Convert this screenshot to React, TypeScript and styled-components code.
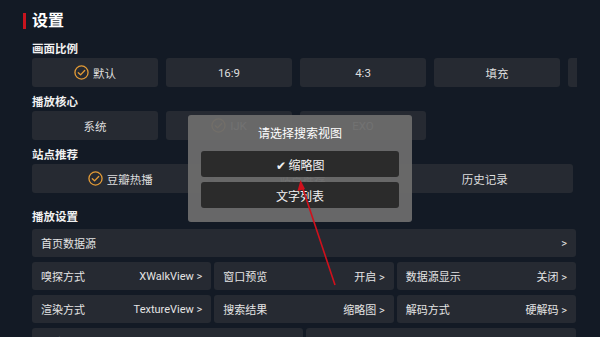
import styled, { createGlobalStyle } from "styled-components";

const GlobalStyle = createGlobalStyle`
  html, body {
    margin: 0;
    padding: 0;
    background: #131a25;
  }
  * {
    box-sizing: border-box;
  }
`;

// last entry is only a sliver at the clipped edge, like in the app
const ratios = ["默认", "16:9", "4:3", "填充", ""];
const cores = ["系统", "IJK", "EXO"];
const sites = ["豆瓣热播", "站点推荐", "历史记录"];

type Cell = { label: string; value: string };

const rows: Cell[][] = [
  [
    { label: "嗅探方式", value: "XWalkView" },
    { label: "窗口预览", value: "开启" },
    { label: "数据源显示", value: "关闭" },
  ],
  [
    { label: "渲染方式", value: "TextureView" },
    { label: "搜索结果", value: "缩略图" },
    { label: "解码方式", value: "硬解码" },
  ],
  [
    { label: "清除缓存", value: "" },
    { label: "播放器", value: "" },
  ],
];

function CheckIcon() {
  return (
    <svg width="15" height="15" viewBox="0 0 16 16">
      <circle cx="8" cy="8" r="7" fill="none" stroke="#e39b36" strokeWidth="1.4" />
      <path d="M4.6 8.2 L7 10.5 L11.4 5.8" fill="none" stroke="#e39b36" strokeWidth="1.4" strokeLinecap="round" strokeLinejoin="round" />
    </svg>
  );
}

export default function App() {
  return (
    <>
      <GlobalStyle />
      <Page>
        <Header>
          <RedBar />
          <Title>设置</Title>
        </Header>
        <Content>
          <Label $top={10}>画面比例</Label>
          <ScrollRow>
            {ratios.map((r, i) => (
              <FixedTile key={i}>
                {i === 0 && <CheckIcon />}
                {r}
              </FixedTile>
            ))}
          </ScrollRow>

          <Label>播放核心</Label>
          <ScrollRow>
            {cores.map((c, i) => (
              <FixedTile key={c}>
                {i === 1 && <CheckIcon />}
                {c}
              </FixedTile>
            ))}
          </ScrollRow>

          <Label>站点推荐</Label>
          <FlexRow>
            {sites.map((s, i) => (
              <FlexTile key={s}>
                {i === 0 && <CheckIcon />}
                {s}
              </FlexTile>
            ))}
          </FlexRow>

          <Label $top={17}>播放设置</Label>
          <List>
            <SettingRow>
              <SettingCell>
                <span>首页数据源</span>
                <Value>&gt;</Value>
              </SettingCell>
            </SettingRow>
            {rows.map((row, i) => (
              <SettingRow key={i}>
                {row.map((c) => (
                  <SettingCell key={c.label}>
                    <span>{c.label}</span>
                    <Value>
                      {c.value} &gt;
                    </Value>
                  </SettingCell>
                ))}
              </SettingRow>
            ))}
          </List>
        </Content>

        <Dialog>
          <DialogTitle>请选择搜索视图</DialogTitle>
          <DialogButton>✔ 缩略图</DialogButton>
          <DialogButton>文字列表</DialogButton>
        </Dialog>

        <Arrow width="600" height="337" viewBox="0 0 600 337">
          <line x1="335" y1="285" x2="302" y2="186" stroke="#d0101c" strokeWidth="1.6" />
          <path d="M300.5 180 L297.5 191 L305 189 Z" fill="#d0101c" />
        </Arrow>
      </Page>
    </>
  );
}

const Page = styled.div`
  position: relative;
  width: 600px;
  height: 337px;
  overflow: hidden;
  padding: 10px 0 0 23px;
  font-family: Roboto, "Noto Sans CJK SC", sans-serif;
  color: #e6e6e6;
`;

const Header = styled.div`
  display: flex;
  align-items: center;
  gap: 6px;
  height: 22px;
`;

const RedBar = styled.div`
  width: 3px;
  height: 16px;
  background: #c8141e;
`;

const Title = styled.div`
  font-size: 16px;
  font-weight: 700;
  color: #ffffff;
  line-height: 22px;
`;

const Content = styled.div`
  margin-left: 9px;
  width: 545px;
`;

const Label = styled.div<{ $top?: number }>`
  margin-top: ${({ $top }) => $top ?? 8}px;
  margin-bottom: 2px;
  font-size: 11.5px;
  font-weight: 700;
  line-height: 14px;
  color: #f0f0f0;
`;

const ScrollRow = styled.div`
  display: flex;
  gap: 8px;
  overflow: hidden;
  width: 545px;
`;

const TileBase = styled.div`
  height: 29px;
  display: flex;
  align-items: center;
  justify-content: center;
  gap: 4px;
  background: #262a32;
  border-radius: 3px;
  font-size: 11.5px;
  color: #dedede;
`;

const FixedTile = styled(TileBase)`
  flex: 0 0 126px;
`;

const FlexRow = styled.div`
  display: flex;
  gap: 6px;
  width: 541px;
`;

const FlexTile = styled(TileBase)`
  flex: 1;
`;

const List = styled.div`
  margin-top: 5px;
  display: flex;
  flex-direction: column;
  gap: 5px;
  width: 544px;
`;

const SettingRow = styled.div`
  display: flex;
  gap: 3px;
`;

const SettingCell = styled.div`
  flex: 1;
  height: 28px;
  display: flex;
  align-items: center;
  justify-content: space-between;
  padding: 0 9px;
  background: #262a32;
  border-radius: 3px;
  font-size: 11px;
  color: #e4e4e4;
`;

const Value = styled.span`
  color: #e4e4e4;
`;

const Dialog = styled.div`
  position: absolute;
  left: 188px;
  top: 115px;
  width: 224px;
  height: 107px;
  background: rgba(108, 108, 108, 0.95);
  border-radius: 3px;
  padding: 8px 13px 0;
  display: flex;
  flex-direction: column;
  align-items: stretch;
  gap: 5px;
`;

const DialogTitle = styled.div`
  text-align: center;
  font-size: 12px;
  line-height: 22px;
  color: #ffffff;
  margin-bottom: 1px;
`;

const DialogButton = styled.div`
  height: 26px;
  display: flex;
  align-items: center;
  justify-content: center;
  background: #2b2b2b;
  border-radius: 3px;
  font-size: 12px;
  color: #f2f2f2;
`;

const Arrow = styled.svg`
  position: absolute;
  left: 0;
  top: 0;
  pointer-events: none;
`;
